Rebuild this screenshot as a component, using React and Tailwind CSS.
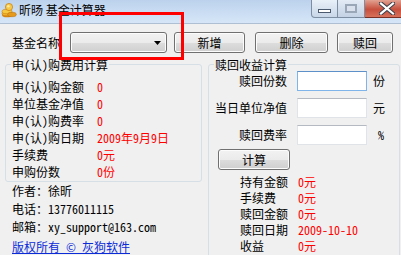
import React from 'react';

const body = "font-['Noto_Sans_Mono_CJK_SC','Noto_Sans_CJK_SC',monospace] text-[12px] text-black";
const btn =
  'flex items-center justify-center h-[21px] rounded-[3px] border border-[#707070] bg-[linear-gradient(to_bottom,#f2f2f2_0%,#ebebeb_50%,#dddddd_51%,#cfcfcf_100%)] shadow-[inset_0_0_0_1px_#fcfcfc]';

function Coins() {
  return (
    <svg width="16" height="16" viewBox="0 0 16 16" className="ml-[1px] mt-[2px] shrink-0">
      <ellipse cx="6" cy="13" rx="5" ry="2.3" fill="#d9860f" />
      <ellipse cx="6" cy="11.5" rx="5" ry="2.3" fill="#f3b731" stroke="#c77a0a" strokeWidth="0.6" />
      <ellipse cx="6" cy="9.5" rx="5" ry="2.3" fill="#f6c842" stroke="#c77a0a" strokeWidth="0.6" />
      <ellipse cx="11" cy="12.5" rx="4.3" ry="2.2" fill="#e69a1c" stroke="#b8700a" strokeWidth="0.6" />
      <circle cx="8" cy="5" r="3.6" fill="#f7c94a" stroke="#c77a0a" strokeWidth="0.7" />
      <circle cx="7.3" cy="4.2" r="1.3" fill="#fdeaa0" />
    </svg>
  );
}

function WinButtons() {
  return (
    <div className="ml-auto mr-[-7px] flex self-start">
      <div className="relative w-[27px] h-[18px] rounded-bl-[4px] border border-t-0 border-[#7d8ea3] bg-[linear-gradient(to_bottom,#e9f0f8,#c8d7e8)] flex items-end justify-center pb-[4px]">
        <div className="w-[13px] h-[4px] bg-white border border-[#4b5a6e]" />
      </div>
      <div className="relative w-[27px] h-[18px] border border-t-0 border-l-0 border-[#7d8ea3] bg-[linear-gradient(to_bottom,#e3ebf5,#c3d2e4)] flex items-center justify-center">
        <div className="w-[12px] h-[9px] border-[2px] border-[#9aa7b6] bg-[#d9e2ec]" />
      </div>
      <div className="w-[43px] h-[18px] rounded-br-[4px] border border-t-0 border-l-0 border-[#7a2f25] bg-[linear-gradient(to_bottom,#e2a191,#c7503e_55%,#d8705a)] flex items-center justify-start pl-[14px]">
        <svg width="16" height="13" viewBox="0 0 16 13">
          <path d="M2 1.5 L14 11.5 M14 1.5 L2 11.5" stroke="#3a3f4a" strokeWidth="4.2" strokeLinecap="square" />
          <path d="M2 1.5 L14 11.5 M14 1.5 L2 11.5" stroke="#ffffff" strokeWidth="2.2" strokeLinecap="square" />
        </svg>
      </div>
    </div>
  );
}

const leftRows = [
  ['申(认)购金额', '0'],
  ['单位基金净值', '0'],
  ['申(认)购费率', '0'],
  ['申(认)购日期', '2009年9月9日'],
  ['手续费', '0元'],
  ['申购份数', '0份'],
];

const inputs = [
  ['赎回份数', '份', true, 'ml-[6px]'],
  ['当日单位净值', '元', false, 'ml-[6px]'],
  ['赎回费率', '%', false, 'ml-[11px]'],
];

const results = [
  ['持有金额', '0元'],
  ['手续费', '0元'],
  ['赎回金额', '0元'],
  ['赎回日期', '2009-10-10'],
  ['收益', '0元'],
];

export default function App() {
  return (
    <div className={`relative w-[401px] h-[255px] overflow-hidden bg-[#f0f0f0] ${body}`}>
      {/* title bar */}
      <div className="flex h-[24px] border-b border-[#aebfd3] bg-[linear-gradient(to_bottom,#bcd2ec,#d6e6f8)]">
        <Coins />
        <span className="ml-[2px] mt-[3px] leading-[14px] text-[12px] font-['Noto_Sans_CJK_SC',sans-serif] whitespace-nowrap">
          昕旸 基金计算器
        </span>
        <WinButtons />
      </div>

      {/* fund row */}
      <div className="mt-[8px] flex items-center h-[21px] pl-[12px] whitespace-nowrap">
        <span className="w-[58px] leading-[14px]">基金名称</span>
        <div className={`${btn} w-[97px] justify-end pr-[5px]`}>
          <svg width="7" height="4" viewBox="0 0 7 4">
            <path d="M0 0 H7 L3.5 4 Z" fill="#000" />
          </svg>
        </div>
        <div className={`${btn} ml-[7px] w-[71px]`}>新增</div>
        <div className={`${btn} ml-[10px] w-[73px]`}>删除</div>
        <div className={`${btn} ml-[9px] w-[56px]`}>赎回</div>
      </div>

      <div className="mt-[5px] flex pl-[5px] gap-[6px] whitespace-nowrap">
        {/* left column */}
        <div className="w-[197px] shrink-0">
          <fieldset className="border border-[#d5dfe5] rounded-[3px] pl-[6px] pb-[1px]">
            <legend className="-ml-[1px] px-[1px] h-[13px] leading-[13px]">申(认)购费用计算</legend>
            <div className="pt-[7px]">
              {leftRows.map(([k, v]) => (
                <div key={k} className="flex h-[17px] items-center">
                  <span className="w-[85px]">{k}</span>
                  <span className="text-[#ff0000]">{v}</span>
                </div>
              ))}
            </div>
          </fieldset>
          <div className="pl-[7px]">
            <div className="h-[18px] flex items-center">作者：徐昕</div>
            <div className="h-[17px] flex items-center">电话：13776011115</div>
            <div className="h-[20px] flex items-center">邮箱：xy_support@163.com</div>
            <div className="h-[19px] flex items-center">
              <span className="text-[#0b2bd8] underline">版权所有 © 灰狗软件</span>
            </div>
          </div>
        </div>

        {/* right column */}
        <fieldset className="w-[192px] h-[230px] shrink-0 border border-[#d5dfe5] rounded-[3px] pl-[6px]">
          <legend className="-ml-[1px] px-[1px] h-[13px] leading-[13px]">赎回收益计算</legend>
          <div className="flex flex-col gap-[7px]">
            {inputs.map(([k, u, focus, ml]) => (
              <div key={k} className="flex h-[20px] items-center">
                <span className="w-[72px] text-right">{k}</span>
                <div
                  className={`ml-[10px] w-[70px] h-[20px] bg-white border ${
                    focus ? 'border-[#7eb4ea] border-t-[#5d8fc8]' : 'border-[#e0e3e8] border-t-[#b5b9c1]'
                  }`}
                />
                <span className={ml}>{u}</span>
              </div>
            ))}
          </div>
          <div className={`${btn} mt-[4px] ml-[3px] w-[72px] h-[20px]`}>计算</div>
          <div className="mt-[4px]">
            {results.map(([k, v]) => (
              <div key={k} className="flex h-[16px] items-center">
                <span className="ml-[25px] w-[58px]">{k}</span>
                <span className="text-[#ff0000]">{v}</span>
              </div>
            ))}
          </div>
        </fieldset>
      </div>

      {/* red annotation box */}
      <div className="absolute left-[59px] top-[12px] w-[125px] h-[48px] border-[3px] border-[#ff0000]" />
    </div>
  );
}
